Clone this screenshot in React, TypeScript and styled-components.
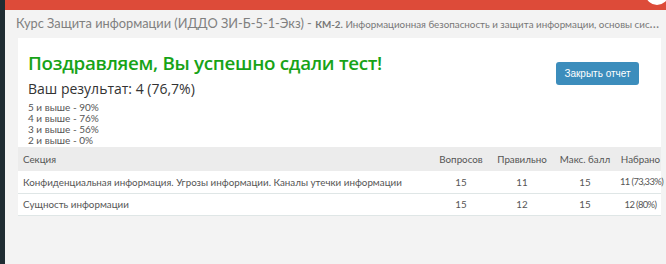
import React from "react";
import styled, { createGlobalStyle } from "styled-components";

const GlobalStyle = createGlobalStyle`
  html, body {
    margin: 0;
    padding: 0;
    width: 666px;
    height: 264px;
    overflow: hidden;
    background: #f3f3f3;
  }
  * {
    box-sizing: border-box;
  }
`;

type Row = {
  section: string;
  questions: number;
  correct: number;
  max: number;
  scored: string;
};

const rows: Row[] = [
  {
    section:
      "Конфиденциальная информация. Угрозы информации. Каналы утечки информации",
    questions: 15,
    correct: 11,
    max: 15,
    scored: "11 (73,33%)",
  },
  {
    section: "Сущность информации",
    questions: 15,
    correct: 12,
    max: 15,
    scored: "12 (80%)",
  },
];

const thresholds = [
  "5 и выше - 90%",
  "4 и выше - 76%",
  "3 и выше - 56%",
  "2 и выше - 0%",
];

const App: React.FC = () => {
  return (
    <>
      <GlobalStyle />
      <Shell>
        <Sidebar />
        <Main>
          <TopBar>
            <Avatar />
          </TopBar>
          <PageTitle>
            Курс Защита информации (ИДДО ЗИ-Б-5-1-Экз) - <small>
              <b>КМ-2.</b> Информационная безопасность и защита информации,
              основы системы защиты информации
            </small>
          </PageTitle>
          <Panel>
            <PanelHead>
              <Summary>
                <Congrats>Поздравляем, Вы успешно сдали тест!</Congrats>
                <Result>Ваш результат: 4 (76,7%)</Result>
                <Scale>
                  {thresholds.map((t) => (
                    <li key={t}>{t}</li>
                  ))}
                </Scale>
              </Summary>
              <CloseButton>Закрыть отчет</CloseButton>
            </PanelHead>
            <Table>
              <colgroup>
                <col />
                <col style={{ width: 66 }} />
                <col style={{ width: 56 }} />
                <col style={{ width: 70 }} />
                <col style={{ width: 41 }} />
              </colgroup>
              <thead>
                <tr>
                  <Th>Секция</Th>
                  <Th $center>Вопросов</Th>
                  <Th $center>Правильно</Th>
                  <Th $center>Макс. балл</Th>
                  <Th $center>Набрано</Th>
                </tr>
              </thead>
              <tbody>
                {rows.map((r) => (
                  <tr key={r.section}>
                    <Td>{r.section}</Td>
                    <Td $center>{r.questions}</Td>
                    <Td $center>{r.correct}</Td>
                    <Td $center>{r.max}</Td>
                    <Td $center $tight>
                      {r.scored}
                    </Td>
                  </tr>
                ))}
              </tbody>
            </Table>
          </Panel>
        </Main>
      </Shell>
    </>
  );
};

export default App;

const Shell = styled.div`
  display: flex;
  width: 666px;
  height: 264px;
  font-family: "Lato", "Liberation Sans", sans-serif;
`;

const Sidebar = styled.div`
  width: 5px;
  flex-shrink: 0;
  background: #1f2c32;
`;

const Main = styled.div`
  flex: 1;
  min-width: 0;
  display: flex;
  flex-direction: column;
  background: #f3f3f3;
`;

const TopBar = styled.div`
  height: 10px;
  background: #dd4b39;
  position: relative;
  overflow: hidden;
`;

const Avatar = styled.div`
  position: absolute;
  right: -2px;
  top: -15px;
  width: 22px;
  height: 20px;
  border-radius: 50%;
  background: #ffffff;
`;

const PageTitle = styled.h1`
  margin: 0;
  padding: 3px 4px 0 11px;
  height: 28px;
  font-size: 12.8px;
  font-weight: 400;
  line-height: 20px;
  color: #808080;
  white-space: nowrap;
  overflow: hidden;
  text-overflow: ellipsis;

  small {
    font-size: 9.8px;
    color: #777;
  }
  b {
    font-weight: 700;
  }
`;

const Panel = styled.section`
  margin: 0 5px 0 13px;
  background: #ffffff;
  padding-top: 12px;
`;

const PanelHead = styled.div`
  display: flex;
  justify-content: space-between;
  align-items: flex-start;
  padding: 0 22px 0 10px;
`;

const Summary = styled.div`
  display: flex;
  flex-direction: column;
`;

const Congrats = styled.h2`
  margin: 0;
  font-family: "Open Sans", "Liberation Sans", sans-serif;
  font-size: 18.8px;
  font-weight: 600;
  letter-spacing: -0.3px;
  line-height: 26px;
  color: #17a317;
`;

const Result = styled.h3`
  margin: 3px 0 0;
  font-family: "Open Sans", "Liberation Sans", sans-serif;
  font-size: 14px;
  font-weight: 400;
  line-height: 20px;
  color: #333;
`;

const Scale = styled.ul`
  list-style: none;
  margin: 3px 0 0;
  padding: 0;
  font-size: 10px;
  line-height: 11px;
  color: #555;
`;

const CloseButton = styled.button`
  margin-top: 12px;
  width: 83px;
  height: 23px;
  padding: 0;
  border: none;
  border-radius: 3px;
  background: #3c8dbc;
  color: #ffffff;
  font-family: "Liberation Sans", sans-serif;
  font-size: 10px;
  cursor: pointer;
`;

const Table = styled.table`
  width: 100%;
  table-layout: fixed;
  border-collapse: collapse;
  margin-top: 1px;
  font-size: 9.8px;
  color: #555;
`;

const Th = styled.th<{ $center?: boolean }>`
  height: 24px;
  padding: 0 0 0 5px;
  background: #ececec;
  font-weight: 400;
  text-align: ${(p) => (p.$center ? "center" : "left")};
  white-space: nowrap;
  ${(p) => p.$center && "padding: 0;"}
`;

const Td = styled.td<{ $center?: boolean; $tight?: boolean }>`
  height: 22px;
  padding: 0 0 0 5px;
  border-bottom: 1px solid #dfe6e6;
  text-align: ${(p) => (p.$center ? "center" : "left")};
  white-space: nowrap;
  ${(p) => p.$center && "padding: 0;"}
  ${(p) => p.$tight && "letter-spacing: -0.6px; font-size: 9.4px;"}
`;
